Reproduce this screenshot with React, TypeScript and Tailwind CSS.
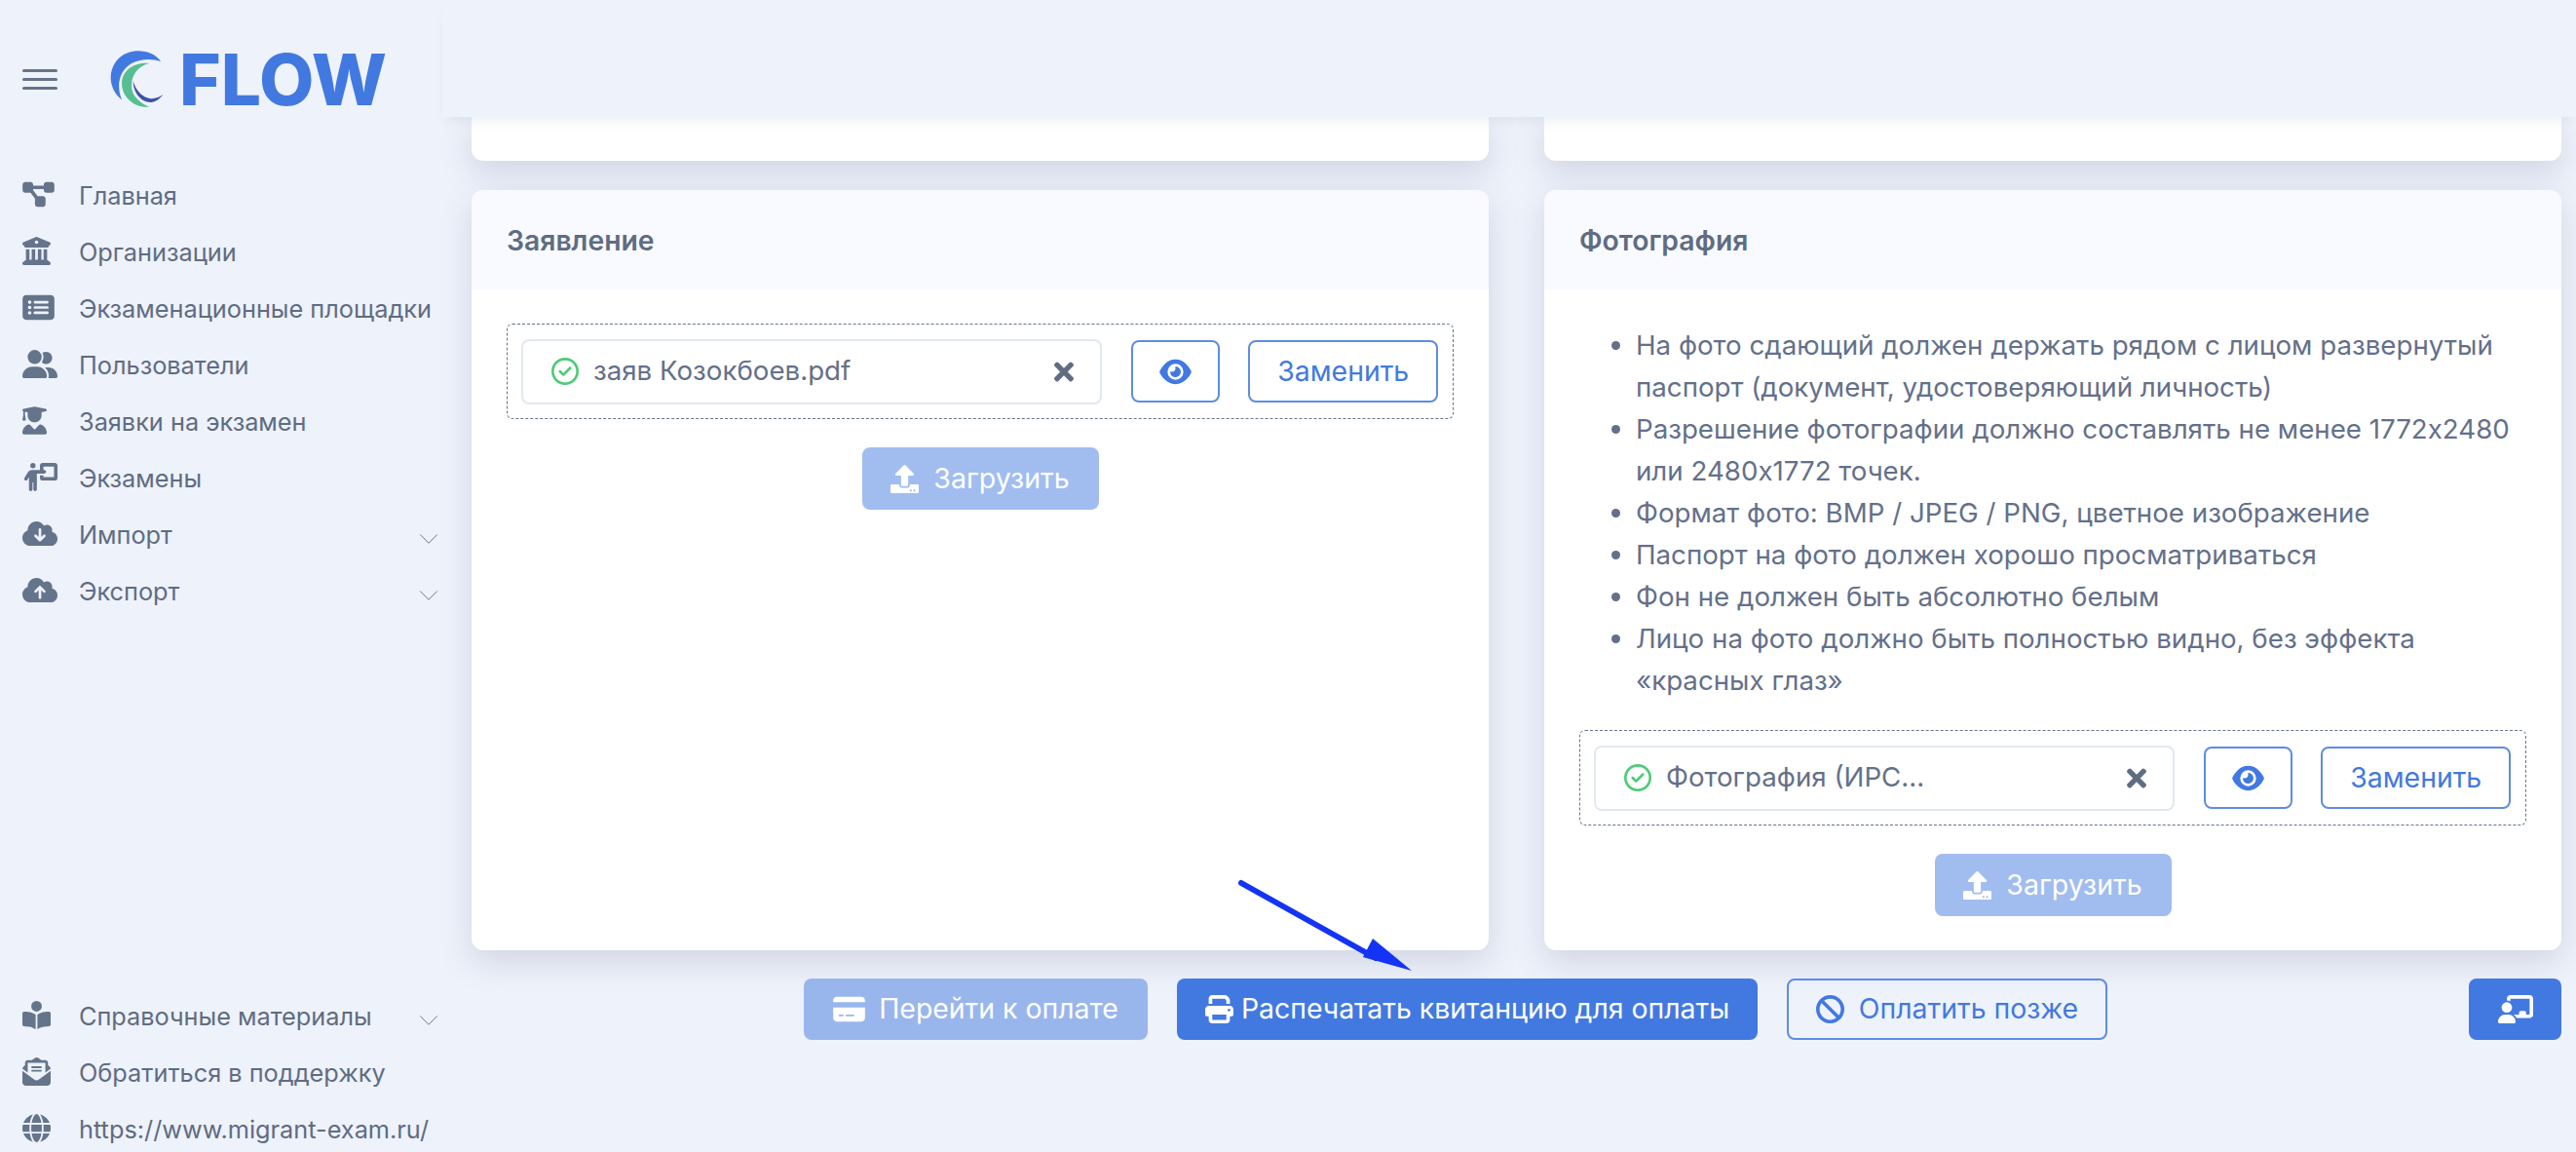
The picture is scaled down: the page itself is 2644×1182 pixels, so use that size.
import React from "react";
import {
  FaDiagramProject,
  FaBuildingColumns,
  FaRectangleList,
  FaUserGroup,
  FaUserGraduate,
  FaPersonChalkboard,
  FaCloudArrowDown,
  FaCloudArrowUp,
  FaBookOpenReader,
  FaEnvelopeOpenText,
  FaGlobe,
  FaEye,
  FaCreditCard,
  FaPrint,
  FaBan,
  FaRegCircleCheck,
  FaChalkboardUser,
} from "react-icons/fa6";
import { FaTimes, FaUpload } from "react-icons/fa";
import { ChevronDown } from "lucide-react";

// react-icons sets width=height=1em, so wide glyphs need their width spelled out
const topItems = [
  { icon: FaDiagramProject, label: "Главная", size: "w-[33px]" },
  { icon: FaBuildingColumns, label: "Организации", size: "w-[29px]" },
  { icon: FaRectangleList, label: "Экзаменационные площадки", size: "w-[33px]" },
  { icon: FaUserGroup, label: "Пользователи", size: "w-[36px]" },
  { icon: FaUserGraduate, label: "Заявки на экзамен", size: "w-[25px]" },
  { icon: FaPersonChalkboard, label: "Экзамены", size: "w-[36px]" },
  { icon: FaCloudArrowDown, label: "Импорт", size: "w-[36px]", arrow: true },
  { icon: FaCloudArrowUp, label: "Экспорт", size: "w-[36px]", arrow: true },
];

const bottomItems = [
  { icon: FaBookOpenReader, label: "Справочные материалы", size: "w-[29px]", arrow: true },
  { icon: FaEnvelopeOpenText, label: "Обратиться в поддержку", size: "w-[29px]" },
  { icon: FaGlobe, label: "https://www.migrant-exam.ru/", size: "w-[29px]" },
];

const rules = [
  "На фото сдающий должен держать рядом с лицом развернутый паспорт (документ, удостоверяющий личность)",
  "Разрешение фотографии должно составлять не менее 1772x2480 или 2480x1772 точек.",
  "Формат фото: BMP / JPEG / PNG, цветное изображение",
  "Паспорт на фото должен хорошо просматриваться",
  "Фон не должен быть абсолютно белым",
  "Лицо на фото должно быть полностью видно, без эффекта «красных глаз»",
];

type Item = {
  icon: React.ComponentType<{ className?: string }>;
  label: string;
  size: string;
  arrow?: boolean;
};

const NavItem = ({ item }: { item: Item }) => {
  const Icon = item.icon;
  return (
    <div className="h-[58px] flex items-center pl-[23px] pr-[27px] text-[25.3px] text-[#5f6c82]">
      <span className="w-[58px] shrink-0 -mt-[4px]">
        <Icon className={`h-[29px] text-[#64748b] ${item.size}`} />
      </span>
      <span className="whitespace-nowrap">{item.label}</span>
      {item.arrow && (
        <ChevronDown className="ml-auto shrink-0 w-[34px] h-[34px] text-[#64748b] mt-[8px]" strokeWidth={0.7} />
      )}
    </div>
  );
};

const FileRow = ({ name }: { name: string }) => (
  <div className="h-[98px] border border-dashed border-[#64748b] rounded-[6px] flex items-center pl-[14px] pr-[15px]">
    <div className="w-[597px] h-[67px] border-2 border-[#e2e8f0] rounded-[8px] flex items-center pl-[29px] pr-[27px]">
      <FaRegCircleCheck className="w-[28px] h-[28px] text-[#4fca78] shrink-0" />
      <span className="ml-[15px] text-[27.7px] text-[#64708a]">{name}</span>
      <FaTimes className="ml-auto w-[20px] h-[29px] text-[#5f6c82]" />
    </div>
    <div className="ml-[30px] w-[92px] h-[64px] border-2 border-[#5f8ce4] rounded-[8px] flex items-center justify-center">
      <FaEye className="w-[33px] h-[29px] text-[#4279e0]" />
    </div>
    <div className="ml-[29px] w-[195px] h-[64px] border-2 border-[#5f8ce4] rounded-[8px] flex items-center justify-center text-[28.4px] text-[#4279e0]">
      Заменить
    </div>
  </div>
);

const UploadButton = () => (
  <div className="mt-[29px] mx-auto w-[243px] h-[64px] rounded-[8px] bg-[#a1bdf0] flex items-center justify-center gap-[15px] text-[28.5px] text-white">
    <FaUpload className="w-[29px] h-[29px]" />
    Загрузить
  </div>
);

const Card = ({ title, children }: { title: string; children: React.ReactNode }) => (
  <div className="flex-1 bg-white rounded-[12px] shadow-[0_12px_32px_rgba(100,116,139,0.22)] overflow-hidden flex flex-col">
    <div className="h-[102px] shrink-0 bg-[#f8faff] flex items-center pl-[36px] pt-[2px] text-[28.3px] font-semibold text-[#5f6c82]">
      {title}
    </div>
    <div className="px-[36px] pt-[35px] flex flex-col">{children}</div>
  </div>
);

const App: React.FC = () => {
  return (
    <div
      className="w-full h-screen overflow-hidden flex bg-[#eef2fb]"
      style={{ fontFamily: "Inter, 'Noto Sans', sans-serif" }}
    >
      <aside className="w-[484px] shrink-0 flex flex-col relative z-20">
        <div className="h-[120px] flex items-center pl-[23px] pt-[42px]">
          <div className="w-[36px] flex flex-col gap-[6px]">
            <div className="h-[3px] bg-[#64748b] rounded-full" />
            <div className="h-[3px] bg-[#64748b] rounded-full" />
            <div className="h-[3px] bg-[#64748b] rounded-full" />
          </div>
          <svg viewBox="60 60 180 190" className="ml-[51px] w-[60px] h-[63px] shrink-0">
            <path d="M226 100 C200 60 130 55 95 90 C60 125 62 185 105 218 C85 170 100 125 135 105 C165 90 200 90 226 100 Z" fill="#4279e0" />
            <path d="M190 105 C140 100 103 130 105 170 C106 210 145 245 190 240 C155 225 132 200 135 170 C137 135 160 112 190 105 Z" fill="#55bf93" />
            <path d="M140 160 C140 200 170 230 200 225 C215 222 225 212 232 202 C215 215 190 220 170 205 C155 194 146 180 140 160 Z" fill="#3f51a8" />
          </svg>
          <span className="ml-[14px] text-[73px] leading-none font-extrabold text-[#4279e0]">FLOW</span>
        </div>
        <nav className="mt-[52px] flex flex-col">
          {topItems.map((item) => (
            <NavItem key={item.label} item={item} />
          ))}
        </nav>
        <nav className="mt-auto flex flex-col translate-y-[6px]">
          {bottomItems.map((item) => (
            <NavItem key={item.label} item={item} />
          ))}
        </nav>
      </aside>

      <main className="flex-1 min-w-0 flex flex-col pr-[15px]">
        <header className="relative z-10 h-[120px] shrink-0 -ml-[30px] -mr-[15px] bg-[#eef3fb] shadow-[0_8px_12px_-6px_rgba(100,116,139,0.14)]" />
        <div className="flex gap-[57px] h-[45px] shrink-0">
          <div className="flex-1 bg-white rounded-b-[12px] shadow-[0_12px_32px_rgba(100,116,139,0.22)]" />
          <div className="flex-1 bg-white rounded-b-[12px] shadow-[0_12px_32px_rgba(100,116,139,0.22)]" />
        </div>
        <div className="mt-[30px] flex gap-[57px] h-[780px] shrink-0">
          <Card title="Заявление">
            <FileRow name="заяв Козокбоев.pdf" />
            <UploadButton />
          </Card>
          <Card title="Фотография">
            <ul className="list-disc pl-[58px] text-[27.7px] leading-[43px] text-[#64708a] mt-[1px] mb-[29px]">
              {rules.map((rule) => (
                <li key={rule}>{rule}</li>
              ))}
            </ul>
            <FileRow name="Фотография (ИРС..." />
            <UploadButton />
          </Card>
        </div>
        <div className="mt-[29px] flex items-center gap-[30px] pl-[341px]">
          <div className="w-[353px] h-[63px] rounded-[8px] bg-[#99b6ec] flex items-center justify-center gap-[14px] text-[28.4px] text-white">
            <FaCreditCard className="w-[33px] h-[29px]" />
            Перейти к оплате
          </div>
          <div className="w-[596px] h-[63px] rounded-[8px] bg-[#4279e0] flex items-center justify-center gap-[8px] text-[28.4px] text-white">
            <FaPrint className="w-[29px] h-[29px]" />
            Распечатать квитанцию для оплаты
          </div>
          <div className="w-[329px] h-[63px] rounded-[8px] border-2 border-[#5f8ce4] flex items-center justify-center gap-[15px] text-[28.4px] text-[#4279e0]">
            <FaBan className="w-[29px] h-[29px]" />
            Оплатить позже
          </div>
          <div className="ml-auto w-[95px] h-[63px] rounded-[8px] bg-[#4279e0] flex items-center justify-center text-white">
            <FaChalkboardUser className="w-[36px] h-[29px]" />
          </div>
        </div>
      </main>

      {/* annotation arrow drawn over the screenshot */}
      <svg className="absolute left-[1260px] top-[895px] w-[200px] h-[110px] z-30" viewBox="1260 895 200 110">
        <line x1="1274" y1="906" x2="1412" y2="983" stroke="#1434f5" strokeWidth="6" strokeLinecap="round" />
        <polygon points="1449,996 1399,982 1409,963" fill="#1434f5" />
      </svg>
    </div>
  );
};

export default App;
